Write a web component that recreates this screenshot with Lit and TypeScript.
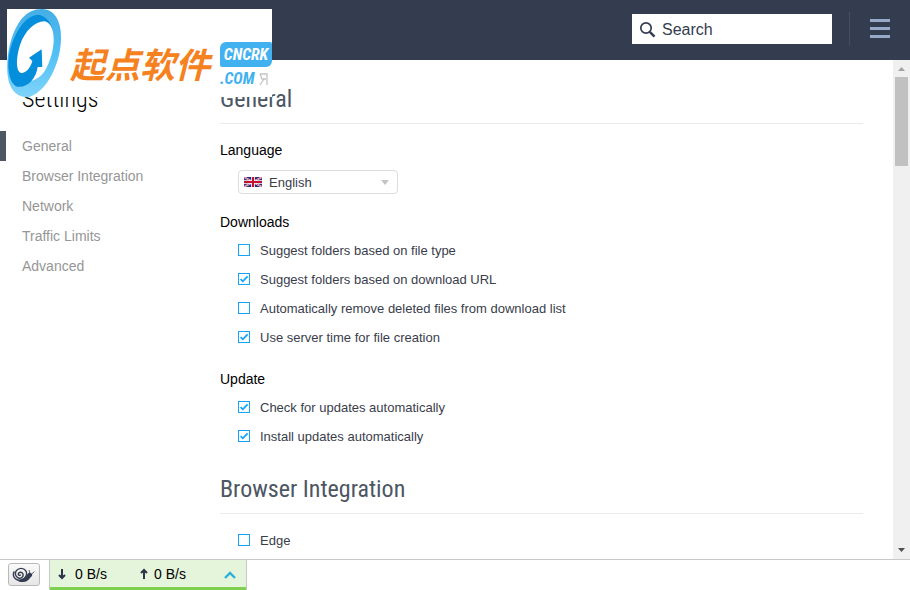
import { LitElement, html, svg, css, nothing } from "lit";
import { customElement, property } from "lit/decorators.js";
import { classMap } from "lit/directives/class-map.js";

@customElement("check-row")
class CheckRow extends LitElement {
  @property() label = "";
  @property({ type: Boolean }) on = false;

  static styles = css`
    :host { display: block; }
    .row {
      display: flex;
      align-items: center;
      gap: 10px;
      height: 28px;
      margin-bottom: 1px;
      padding-left: 18px;
      font-size: 13px;
      line-height: 16px;
      color: #3a3d4b;
    }
    .text { padding-top: 2px; }
    .box { display: grid; width: 12px; height: 12px; }
    .box > * { grid-area: 1 / 1; }
    .input {
      appearance: none;
      box-sizing: border-box;
      width: 12px;
      height: 12px;
      margin: 0;
      border: 1px solid #16a4fa;
      background: #fff;
    }
    .tick { display: none; pointer-events: none; z-index: 1; }
    .input:checked + .tick { display: block; }
  `;

  render() {
    return html`<label class="row">
      <span class="box">
        <input class="input" type="checkbox" .checked=${this.on} />
        <svg class="tick" width="12" height="12" viewBox="0 0 12 12" fill="none" stroke="#16a4fa" stroke-width="1.8">
          <path d="M2.6 6.2 4.8 8.3 9.6 3.3" />
        </svg>
      </span>
      <span class="text">${this.label}</span>
    </label>`;
  }
}

const emblem = svg`
  <defs>
    <linearGradient id="ring" x1="0" y1="0" x2="0" y2="1">
      <stop offset="0" stop-color="#46aee6" />
      <stop offset="0.5" stop-color="#50c0f4" />
      <stop offset="1" stop-color="#7fd3fa" />
    </linearGradient>
  </defs>
  <path fill="url(#ring)" fill-rule="evenodd" d="M128 27C165 28 185 66 183 118C181 190 143 272 90 290C62 297 36 279 26 244C14 190 26 110 62 60C82 35 105 26 128 27ZM134 62C104 58 76 86 60 128C45 170 44 212 60 236C80 251 119 243 138 206C164 160 175 78 134 62Z" />
  <path fill="#048edb" d="M158 92C156 68 134 44 112 44C75 47 42 100 29 155C19 206 29 251 51 260C83 264 108 236 113 201L127 201L125 148L87 173L97 183C91 204 78 220 63 219C47 212 48 174 60 135C75 90 108 62 135 64C148 67 155 78 158 92Z" />
`;

@customElement("app-root")
class AppRoot extends LitElement {
  static styles = css`
    :host {
      display: flex;
      flex-direction: column;
      position: relative;
      height: 100vh;
      overflow: hidden;
      background: #fff;
      font-family: "Liberation Sans", Arial, sans-serif;
      font-size: 14px;
      line-height: 16px;
      color: #000;
    }
    .header {
      flex: none;
      display: flex;
      justify-content: flex-end;
      align-items: center;
      box-sizing: border-box;
      height: 60px;
      padding: 0 20px 2px 0;
      background: #343c50;
    }
    .search {
      display: flex;
      align-items: center;
      gap: 6px;
      box-sizing: border-box;
      width: 200px;
      height: 30px;
      padding-left: 7px;
      background: #fff;
    }
    .search-input {
      flex: 1;
      min-width: 0;
      padding: 2px 0 0;
      border: 0;
      outline: 0;
      background: none;
      font: 16px/20px "Liberation Sans", Arial, sans-serif;
      color: #343c50;
    }
    .search-input::placeholder { color: #343c50; opacity: 1; }
    .divider { width: 1px; height: 34px; margin: 0 20px 0 17px; background: #454d61; }
    .menu {
      display: flex;
      flex-direction: column;
      gap: 5px;
      width: 20px;
      padding: 0 0 2px;
      border: 0;
      background: none;
    }
    .bar { height: 3px; background: #97a8c8; }

    .brand {
      position: absolute;
      left: 7px;
      top: 9px;
      z-index: 2;
      display: flex;
      width: 265px;
      height: 88px;
      background: #fff;
    }
    .emblem { flex: none; }
    .brand-name {
      margin: 30px 0 0 8px;
      font: italic 700 35px/48px "Noto Sans CJK SC", sans-serif;
      color: #f5821f;
      white-space: nowrap;
    }
    .brand-site {
      position: absolute;
      right: 0;
      top: 33px;
      width: 52px;
      font: italic 700 16px/25px "Roboto Condensed", "Liberation Sans Narrow", sans-serif;
    }
    .site-top {
      border-radius: 6px 2px 6px 2px;
      background: #41b1f0;
      color: #fff;
      text-align: center;
    }
    .site-bottom { display: flex; align-items: center; gap: 4px; line-height: 24px; color: #41b1f0; }

    .body { flex: 1; min-height: 0; display: flex; }
    .sidebar { flex: none; width: 220px; padding-top: 24px; }
    .title {
      margin: 0;
      font: 400 24px/30px "Roboto Condensed", "Liberation Sans Narrow", Roboto, sans-serif;
      color: #4d5663;
      white-space: nowrap;
    }
    .page-title { padding: 0 0 17px 22px; color: #000; font-weight: 300; }
    .link {
      display: block;
      padding-left: 16px;
      border-left: 6px solid transparent;
      line-height: 30px;
      color: #969696;
      text-decoration: none;
    }
    .link.active { border-color: #4d5663; }

    .content {
      flex: 1;
      min-width: 0;
      overflow-y: auto;
      scrollbar-width: none;
      padding: 24px 30px 0 0;
    }
    .section-title { padding-bottom: 9px; border-bottom: 1px solid #ebebeb; }
    .section { padding-bottom: 23px; }
    .groups { display: flex; flex-direction: column; gap: 19px; padding-top: 18px; }
    .groups.plain { padding-top: 12px; }
    .label { display: block; margin: 0 0 6px; font-size: 14px; font-weight: 400; line-height: 16px; }
    .picker {
      display: flex;
      align-items: center;
      position: relative;
      width: 160px;
      margin: 12px 0 1px 18px;
    }
    .select {
      appearance: none;
      box-sizing: border-box;
      width: 100%;
      height: 24px;
      padding: 2px 24px 0 30px;
      border: 1px solid #dcdcdc;
      border-radius: 4px;
      background: #fff;
      font: 13px/16px "Liberation Sans", Arial, sans-serif;
      color: #3a3d4b;
    }
    .flag { position: absolute; left: 6px; pointer-events: none; }
    .caret { position: absolute; right: 9px; pointer-events: none; }

    .scrollbar {
      flex: none;
      display: flex;
      flex-direction: column;
      align-items: center;
      width: 17px;
      background: #f0f0f0;
    }
    .thumb { width: 13px; height: 89px; margin-bottom: auto; background: #c1c1c1; }

    .footer {
      flex: none;
      display: flex;
      align-items: center;
      height: 30px;
      padding-left: 8px;
      border-top: 1px solid #c8c8c8;
      background: #fff;
    }
    .snail {
      display: flex;
      align-items: center;
      justify-content: center;
      box-sizing: border-box;
      width: 32px;
      height: 23px;
      margin: 0 9px 2px 0;
      padding: 0;
      border: 1px solid #b9b9b9;
      border-radius: 3px;
      background: linear-gradient(#fafafa, #e6e6e6);
    }
    .speed {
      display: flex;
      align-items: center;
      box-sizing: border-box;
      width: 198px;
      height: 30px;
      padding: 0 10px 0 7px;
      border: solid #c8c8c8;
      border-width: 0 1px;
      background: linear-gradient(#e5f5dc 27px, #7ed04e 27px);
      font: 14px/16px "Liberation Sans", Arial, sans-serif;
      color: #000;
      text-align: left;
    }
    .rate { display: flex; align-items: center; gap: 8px; width: 82px; padding-bottom: 2px; }
    .rate.up { gap: 5px; }
    .chevron { margin-left: auto; }
  `;

  private links = ["General", "Browser Integration", "Network", "Traffic Limits", "Advanced"];

  private checks(items: [string, boolean][]) {
    return items.map(([label, on]) => html`<check-row label=${label} ?on=${on}></check-row>`);
  }

  render() {
    return html`
      <header class="header">
        <div class="brand">
          <svg class="emblem" width="55" height="88" viewBox="21 27 165 264" overflow="visible">${emblem}</svg>
          <span class="brand-name">起点软件</span>
          <div class="brand-site">
            <div class="site-top">CNCRK</div>
            <div class="site-bottom">
              <span>.COM</span>
              <svg width="9" height="13" viewBox="0 0 9 13" fill="none" stroke="#c4c4c4" stroke-width="1.3">
                <path d="M1 1H8V12M1 1 3 6H7M5 6 1 12" />
              </svg>
            </div>
          </div>
        </div>
        <label class="search">
          <svg width="17" height="18" viewBox="0 0 17 18" fill="none" stroke="#343c50">
            <circle cx="7" cy="8" r="5.2" stroke-width="1.7" />
            <path d="M10.8 11.8 15.5 16.7" stroke-width="2.4" />
          </svg>
          <input class="search-input" type="text" placeholder="Search" aria-label="Search" />
        </label>
        <span class="divider"></span>
        <button class="menu" aria-label="Menu">
          <span class="bar"></span><span class="bar"></span><span class="bar"></span>
        </button>
      </header>

      <div class="body">
        <nav class="sidebar">
          <h1 class="title page-title">Settings</h1>
          ${this.links.map(
            (name, i) => html`<a
              class=${classMap({ link: true, active: i === 0 })}
              href="#${name.toLowerCase().replace(" ", "-")}"
              aria-current=${i === 0 ? "true" : nothing}
              >${name}</a
            >`
          )}
        </nav>

        <main class="content">
          <section class="section">
            <h2 class="title section-title">General</h2>
            <div class="groups">
              <div>
                <label class="label" for="language">Language</label>
                <div class="picker">
                  <select class="select" id="language"><option>English</option></select>
                  <svg class="flag" width="18" height="10" viewBox="0 0 18 10">
                    <path fill="#2b2f7e" d="M0 0H18V10H0z" />
                    <path stroke="#fff" stroke-width="1.6" d="M0 0 18 10M18 0 0 10" />
                    <path stroke="#d2143c" stroke-width=".7" d="M0 0 18 10M18 0 0 10" />
                    <path stroke="#fff" stroke-width="3.6" d="M9 0V10M0 5H18" />
                    <path stroke="#c8102e" stroke-width="2" d="M9 0V10M0 5H18" />
                  </svg>
                  <svg class="caret" width="8" height="5" viewBox="0 0 8 5"><path fill="#c4c4c4" d="M0 0H8L4 5z" /></svg>
                </div>
              </div>
              <div>
                <h3 class="label">Downloads</h3>
                ${this.checks([
                  ["Suggest folders based on file type", false],
                  ["Suggest folders based on download URL", true],
                  ["Automatically remove deleted files from download list", false],
                  ["Use server time for file creation", true],
                ])}
              </div>
              <div>
                <h3 class="label">Update</h3>
                ${this.checks([
                  ["Check for updates automatically", true],
                  ["Install updates automatically", true],
                ])}
              </div>
            </div>
          </section>
          <section>
            <h2 class="title section-title">Browser Integration</h2>
            <div class="groups plain">
              <div>${this.checks([["Edge", false]])}</div>
            </div>
          </section>
        </main>

        <div class="scrollbar" aria-hidden="true">
          <svg width="17" height="17" viewBox="0 0 17 17"><path fill="#a3a3a3" d="M5 11H12L8.5 7z" /></svg>
          <div class="thumb"></div>
          <svg width="17" height="17" viewBox="0 0 17 17"><path fill="#505050" d="M5 6H12L8.5 10z" /></svg>
        </div>
      </div>

      <footer class="footer">
        <button class="snail" aria-label="Limit speed">
          <svg width="24" height="17" viewBox="36 48 72 51" fill="none" stroke="#343c50">
            <path stroke-width="4.2" d="M62 74C60 78 54 76 55 71C57 65 66 65 69 72C71 81 63 87 55 84C46 81 44 70 49 62C56 53 71 53 77 62C82 70 79 80 72 86C63 93 49 92 43 83C39 77 40 69 43 64" />
            <path fill="#343c50" stroke="none" d="M50 90C62 92 74 87 81 75C83 70 88 67 92 69C98 71 98 77 94 80C88 84 86 95 70 96C60 97 54 94 50 90Z" />
            <path stroke-width="2.4" d="M90 72 87 60M94 73 103 65" />
          </svg>
        </button>
        <button class="speed" aria-label="Transfer speed">
          <span class="rate">
            <svg width="10" height="12" viewBox="0 0 10 12" stroke="#2b3448" stroke-width="2" fill="none"><path d="M5 1V10M2 7 5 10 8 7" /></svg>
            0 B/s
          </span>
          <span class="rate up">
            <svg width="10" height="12" viewBox="0 0 10 12" stroke="#2b3448" stroke-width="2" fill="none"><path d="M5 11V2M2 5 5 2 8 5" /></svg>
            0 B/s
          </span>
          <svg class="chevron" width="12" height="8" viewBox="0 0 12 8" fill="none" stroke="#2bb0dc" stroke-width="2.4"><path d="M1 7 6 2 11 7" /></svg>
        </button>
      </footer>
    `;
  }
}
